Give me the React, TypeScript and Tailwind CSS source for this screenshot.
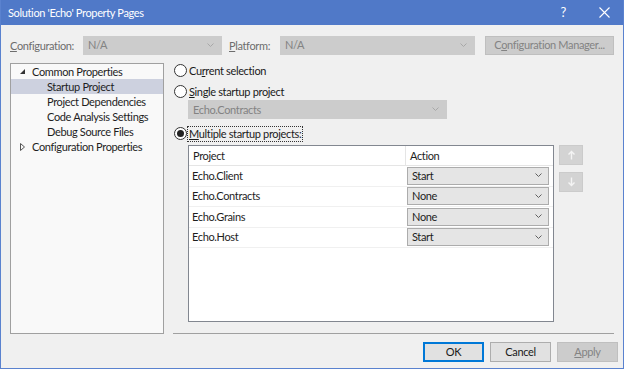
import type { ReactNode } from "react";

const font = { fontFamily: 'Lato, "Noto Sans", sans-serif' };

/** 组合框右侧的小 v 箭头 */
function Chevron({ color = "#a0a0a0" }: { color?: string }) {
  return (
    <svg width="7" height="4" viewBox="0 0 7 4" className="shrink-0">
      <path d="M0.5 0.5 L3.5 3.5 L6.5 0.5" fill="none" stroke={color} strokeWidth="1" />
    </svg>
  );
}

/** 禁用态组合框 */
function DisabledCombo({ text, className }: { text: string; className: string }) {
  return (
    <div
      className={`flex h-[19px] shrink-0 items-center justify-between border border-[#cccccc] bg-[#cccccc] pb-[1px] pl-[4px] pr-[7px] text-[#838383] ${className}`}
    >
      <span>{text}</span>
      <Chevron color="#a8a8a8" />
    </div>
  );
}

/** 单选按钮 + 标签 */
function Radio({ checked, children, focused }: { checked?: boolean; children: ReactNode; focused?: boolean }) {
  return (
    <div className="flex h-[15px] items-center">
      <span className="ml-[1px] grid size-[13px] shrink-0 place-items-center rounded-full border border-[#333333] bg-white">
        {checked && <span className="size-[7px] rounded-full bg-[#222222]" />}
      </span>
      <span
        className={`ml-[1px] px-[1px] leading-[14px] text-[#1a1a1a] ${focused ? "outline outline-1 outline-dotted outline-[#333333]" : ""}`}
      >
        {children}
      </span>
    </div>
  );
}

const rows = [
  { name: "Echo.Client", action: "Start" },
  { name: "Echo.Contracts", action: "None" },
  { name: "Echo.Grains", action: "None" },
  { name: "Echo.Host", action: "Start" },
];

function ArrowBtn({ up }: { up?: boolean }) {
  return (
    <div className="grid h-[20px] w-[24px] place-items-center border border-[#cbcbcb] bg-[#d3d3d3]">
      <svg width="9" height="10" viewBox="0 0 9 10">
        {up ? (
          <path d="M4.5 1.5 V9.5 M1.5 4.5 L4.5 1.5 L7.5 4.5" fill="none" stroke="#f4f4f4" strokeWidth="1.4" />
        ) : (
          <path d="M4.5 0.5 V8.5 M1.5 5.5 L4.5 8.5 L7.5 5.5" fill="none" stroke="#f4f4f4" strokeWidth="1.4" />
        )}
      </svg>
    </div>
  );
}

export default function App() {
  return (
    <div
      className="flex h-[369px] w-[624px] flex-col whitespace-nowrap border-x border-b border-[#5a82cf] bg-[#f0f0f0] text-[11px] leading-[15px] tracking-[-0.35px]"
      style={font}
    >
      {/* 标题栏 */}
      <div className="flex h-[25px] shrink-0 items-center bg-[#5079c8] pl-[7px] text-white">
        <span className="text-[11px]">Solution 'Echo' Property Pages</span>
        <span className="ml-auto mr-[33px] text-[13px]">?</span>
        <svg width="11" height="11" viewBox="0 0 11 11" className="mr-[13px]">
          <path d="M0.5 0.5 L10.5 10.5 M10.5 0.5 L0.5 10.5" stroke="white" strokeWidth="1.1" />
        </svg>
      </div>

      {/* 配置行 */}
      <div className="mt-[11px] flex h-[19px] items-center pb-[1px] pl-[9px] text-[#6d6d6d]">
        <span className="w-[73px]">
          <u>C</u>onfiguration:
        </span>
        <DisabledCombo text="N/A" className="w-[139px]" />
        <span className="ml-[7px] w-[51px]">
          <u>P</u>latform:
        </span>
        <DisabledCombo text="N/A" className="w-[195px]" />
        <div className="ml-[10px] flex h-[19px] w-[129px] items-center justify-center border border-[#bfbfbf] bg-[#cccccc] pb-[1px] text-[#838383]">
          C<u>o</u>nfiguration Manager...
        </div>
      </div>

      {/* 主体 */}
      <div className="mt-[8px] flex h-[271px] pl-[9px]">
        {/* 左侧树 */}
        <div className="h-[271px] w-[154px] shrink-0 border border-[#a0a0a0] bg-[#f9f9f9] text-[#1e1e1e]">
          <div className="flex h-[15px] items-center">
            <svg width="5" height="5" viewBox="0 0 5 5" className="ml-[9px] mr-[7px]">
              <path d="M5 0 L5 5 L0 5 Z" fill="#333333" />
            </svg>
            <span>Common Properties</span>
          </div>
          <div className="flex h-[15px] items-center bg-[#cdd1df] pl-[36px]">Startup Project</div>
          <div className="flex h-[15px] items-center pl-[36px]">Project Dependencies</div>
          <div className="flex h-[15px] items-center pl-[36px]">Code Analysis Settings</div>
          <div className="flex h-[15px] items-center pl-[36px]">Debug Source Files</div>
          <div className="flex h-[15px] items-center">
            <svg width="5" height="8" viewBox="0 0 5 8" className="ml-[9px] mr-[7px]">
              <path d="M0.5 0.5 L4.5 4 L0.5 7.5 Z" fill="none" stroke="#555555" strokeWidth="1" />
            </svg>
            <span>Configuration Properties</span>
          </div>
        </div>

        {/* 右侧 */}
        <div className="ml-[9px] flex w-[441px] flex-col">
          <div>
            <Radio>
              Cu<u>r</u>rent selection
            </Radio>
          </div>
          <div className="mt-[6px]">
            <Radio>
              <u>S</u>ingle startup project
            </Radio>
          </div>
          <DisabledCombo text="Echo.Contracts" className="ml-[15px] mt-[1px] w-[259px]" />
          <div className="mt-[7px]">
            <Radio checked focused>
              <u>M</u>ultiple startup projects:
            </Radio>
          </div>

          <div className="ml-[15px] mt-[4px] flex gap-[5px]">
            {/* 项目表格 */}
            <div className="h-[177px] w-[366px] border border-[#828790] bg-white text-[#1e1e1e]">
              <div className="flex h-[20px] border-b border-[#e5e5e5]">
                <div className="flex w-[217px] items-center border-r border-[#e5e5e5] pb-[1px] pl-[4px]">Project</div>
                <div className="flex items-center pb-[1px] pl-[4px]">Action</div>
              </div>
              {rows.map((r) => (
                <div key={r.name} className="flex h-[20.5px] items-center border-b border-[#f0f0f0]">
                  <div className="w-[218px] pb-[1px] pl-[3px]">{r.name}</div>
                  <div className="flex h-[18px] w-[142px] items-center justify-between border border-[#acacac] bg-[#e5e5e5] pb-[1px] pl-[4px] pr-[6px]">
                    <span>{r.action}</span>
                    <Chevron color="#606060" />
                  </div>
                </div>
              ))}
            </div>
            <div className="flex flex-col gap-[7px]">
              <ArrowBtn up />
              <ArrowBtn />
            </div>
          </div>

          <div className="mt-auto h-[1px] bg-[#a0a0a0]" />
        </div>
      </div>

      {/* 底部按钮 */}
      <div className="mt-[8px] flex justify-end gap-[6px] pr-[5px] text-[#1a1a1a]">
        <div className="flex h-[20px] w-[61px] items-center justify-center border-2 border-[#0078d7] bg-[#e1e1e1] pb-[1px]">OK</div>
        <div className="flex h-[20px] w-[61px] items-center justify-center border border-[#adadad] bg-[#e1e1e1] pb-[1px]">Cancel</div>
        <div className="flex h-[20px] w-[61px] items-center justify-center border border-[#bfbfbf] bg-[#cccccc] pb-[1px] text-[#838383]">
          <u>A</u>pply
        </div>
      </div>
    </div>
  );
}
